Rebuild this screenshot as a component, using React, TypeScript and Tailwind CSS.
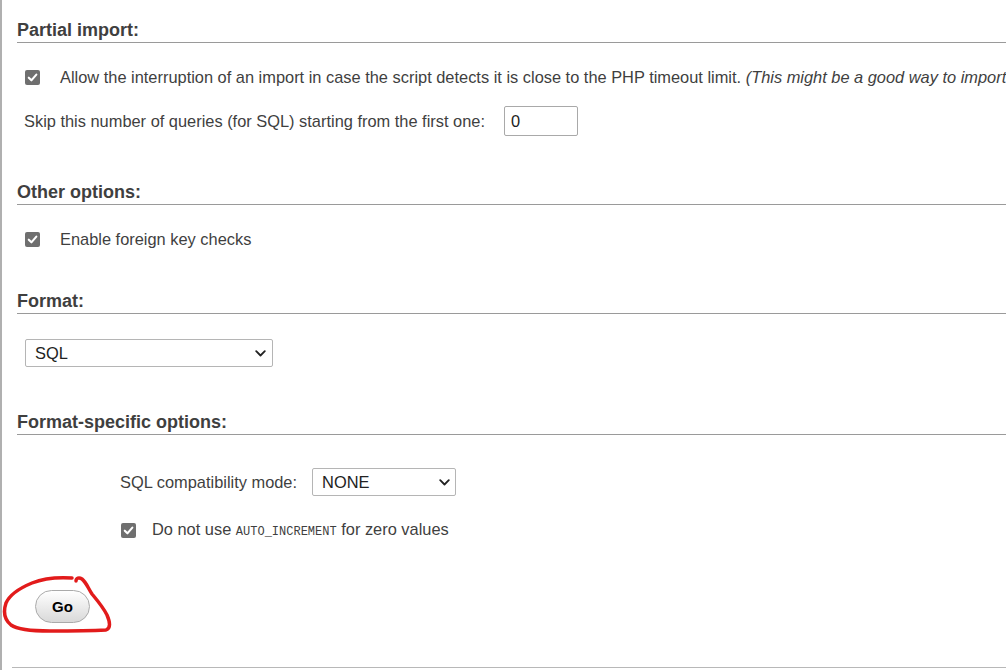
import React from "react";

const Check = () => (
  <span className="inline-flex h-[15px] w-[15px] shrink-0 items-center justify-center rounded-[2px] bg-[#6f6f6f]">
    <svg width="11" height="11" viewBox="0 0 10 10">
      <path d="M1.6 5.2 L4 7.6 L8.5 2.4" fill="none" stroke="#fff" strokeWidth="1.9" strokeLinecap="round" strokeLinejoin="round" />
    </svg>
  </span>
);

const Chevron = () => (
  <svg width="11" height="7" viewBox="0 0 11 7">
    <path d="M1.2 1.2 L5.5 5.5 L9.8 1.2" fill="none" stroke="#222" strokeWidth="1.8" strokeLinecap="round" strokeLinejoin="round" />
  </svg>
);

const Heading = ({ children, mt }: { children: React.ReactNode; mt: string }) => (
  <h3 className={`${mt} ml-[15px] border-b border-[#9a9a9a] pb-[1px] text-[18px] font-bold leading-[22px] text-[#3f3f3f]`}>
    {children}
  </h3>
);

export default function App() {
  return (
    <div
      className="relative h-[670px] w-[1006px] overflow-hidden border-l-2 border-[#b0b0b0] bg-white text-[16.4px] leading-[24px] text-[#3f3f3f]"
      style={{ fontFamily: '"Liberation Sans", Arial, sans-serif' }}
    >
      <div className="flex flex-col pt-[19px]">
        <Heading mt="mt-0">Partial import:</Heading>
        <div className="mt-[22px] flex h-[24px] items-center whitespace-nowrap pl-[23px]">
          <Check />
          <span className="ml-[20px]">
            Allow the interruption of an import in case the script detects it is close to the PHP timeout limit.{" "}
            <i>(This might be a good way to import</i>
          </span>
        </div>
        <div className="mt-[17px] flex h-[30px] items-center pl-[22px]">
          <span>Skip this number of queries (for SQL) starting from the first one:</span>
          <div className="ml-[19px] flex h-[30px] w-[74px] items-center rounded-[2px] border border-[#a9a9a9] pl-[6px] text-[#222]">
            0
          </div>
        </div>

        <Heading mt="mt-[45px]">Other options:</Heading>
        <div className="mt-[22px] flex h-[24px] items-center pl-[23px]">
          <Check />
          <span className="ml-[20px]">Enable foreign key checks</span>
        </div>

        <Heading mt="mt-[39px]">Format:</Heading>
        <div className="mt-[25px] pl-[23px]">
          <div className="flex h-[28px] w-[248px] items-center justify-between rounded-[2px] border border-[#b5b5b5] pl-[9px] pr-[6px] text-[#222]">
            <span>SQL</span>
            <Chevron />
          </div>
        </div>

        <Heading mt="mt-[44px]">Format-specific options:</Heading>
        <div className="mt-[33px] flex h-[28px] items-center pl-[118px]">
          <span>SQL compatibility mode:</span>
          <div className="ml-[15px] flex h-[28px] w-[144px] items-center justify-between rounded-[2px] border border-[#b5b5b5] pl-[9px] pr-[5px] text-[#222]">
            <span>NONE</span>
            <Chevron />
          </div>
        </div>
        <div className="mt-[22px] flex h-[24px] items-center pl-[119px]">
          <Check />
          <span className="ml-[16px]">
            Do not use{" "}
            <code className="text-[12px]" style={{ fontFamily: '"Liberation Mono", monospace' }}>
              AUTO_INCREMENT
            </code>{" "}
            for zero values
          </span>
        </div>

        <div className="mt-[48px] pl-[33px]">
          <button className="flex h-[33px] w-[55px] items-center justify-center rounded-full border border-[#aaa] bg-gradient-to-b from-white to-[#d9d9d9] text-[15px] font-bold text-black">
            Go
          </button>
        </div>

        <div className="ml-[10px] mt-[44px] border-t border-[#b8b8b8]" />
      </div>

      <svg className="pointer-events-none absolute left-0 top-0" width="1006" height="670">
        <path
          d="M70 578 C55 577 40 579 30 583 C18 588 8 594 4 603 C1 612 3 620 9 625 C16 630 30 631 48 631 C65 631 85 631 104 630 C109 628 108 622 105 615 C101 607 95 600 90 594 C86 588 84 582 80 579 C77 577 74 578 74 581"
          fill="none"
          stroke="#e21b1b"
          strokeWidth="3.5"
          strokeLinecap="round"
          strokeLinejoin="round"
        />
      </svg>
    </div>
  );
}
